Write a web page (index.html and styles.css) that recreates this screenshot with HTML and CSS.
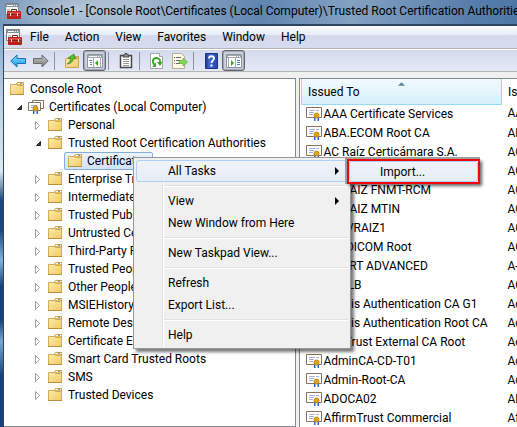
FILE: index.html
```
<!DOCTYPE html>
<html lang="en">
<head>
<meta charset="utf-8">
<title>Console1</title>
<link rel="stylesheet" href="styles.css">
</head>
<body>
<svg class="defs" aria-hidden="true">
  <defs>
    <linearGradient id="gold" x2="1" y2="1"><stop stop-color="#ffebad"/><stop offset="1" stop-color="#efca66"/></linearGradient>
    <linearGradient id="red" x2="0" y2="1"><stop stop-color="#e2554c"/><stop offset="1" stop-color="#b5130f"/></linearGradient>
    <linearGradient id="blue" x2="0" y2="1"><stop stop-color="#8bdcff"/><stop offset="1" stop-color="#0c9be8"/></linearGradient>
    <linearGradient id="gray" x2="0" y2="1"><stop stop-color="#c8c8c8"/><stop offset="1" stop-color="#7c7c7c"/></linearGradient>
    <linearGradient id="navy" x2="1" y2="0"><stop stop-color="#182f8c"/><stop offset=".3" stop-color="#3f68cf"/><stop offset="1" stop-color="#2448ac"/></linearGradient>
    <symbol id="folder" viewBox="0 0 16 16">
      <path d="M7.500 4V2.500l1-1h6V4z" fill="#f5d98c" stroke="#c9a050"/>
      <path d="M9 2h5v1H9z" fill="#fff"/><path d="M11 2h2v1h-2z" fill="#5a9bd8"/>
      <path d="M1.500 3.500h6l1 1h6v9h-13z" fill="url(#gold)" stroke="#d2ab56"/>
      <path d="M1 13.500h14" stroke="#b98f3b"/>
    </symbol>
    <symbol id="cert" viewBox="0 0 16 16">
      <path d="M.5 1.500h15v10H.5z" fill="#fff" stroke="#8a715d"/>
      <path d="M3 4.500h6M10 4.500h3M3 6.500h5M3 8.500h4" stroke="#a9b2de"/>
      <path d="M8 11h1.500v4H8zM11.500 11H13v4h-1.500z" fill="#2863d8"/>
      <circle cx="10.500" cy="9.500" r="2.500" fill="#e0a413" stroke="#c18a10"/>
    </symbol>
    <symbol id="certs" viewBox="0 0 16 16">
      <path d="M4.500 1.500h11v8h-11z" fill="#fff" stroke="#8a715d"/>
      <path d="M.5 3.500h12v8H.5z" fill="#fff" stroke="#8a715d"/>
      <path d="M3 6.500h6M3 8.500h3" stroke="#9aa5d8"/>
      <path d="M5 11h1.500v4H5zM8.500 11H10v4H8.500z" fill="#2863d8"/>
      <circle cx="7.500" cy="9.500" r="2.500" fill="#e0a413" stroke="#c18a10"/>
    </symbol>
    <symbol id="console" viewBox="0 0 16 16">
      <path d="M.5.5h13v11H.5z" fill="#f4f5f6" stroke="#7d858c"/>
      <path d="M1 1h12v3H1z" fill="#87919a"/><path d="M2 2.500h6M9 2.500h1M11 2.500h1" stroke="#fff"/>
      <path d="M2 6h3v5H2z" fill="#c9ced3"/>
      <path d="M6.500 8.500v-2h5v2" fill="none" stroke="#77201c"/>
      <path d="M2.500 8.500h13v7h-13z" fill="url(#red)" stroke="#b5231f"/>
      <path d="M3 11.500h12" stroke="#9c1814"/><path d="M5 10h1v3H5zM12 10h1v3h-1z" fill="#f3dada"/>
    </symbol>
    <symbol id="back" viewBox="0 0 16 16"><path d="M.8 8 7 2v3.500h8.500v5H7V14z" fill="url(#blue)" stroke="#1d70b0"/></symbol>
    <symbol id="forward" viewBox="0 0 16 16"><path d="M15.200 8 9 2v3.500H.5v5H9V14z" fill="url(#gray)" stroke="#6c6c6c"/></symbol>
    <symbol id="up" viewBox="0 0 16 16">
      <path d="M8.500 5V3.500h6V5z" fill="#f5d98c" stroke="#c9a050"/>
      <path d="M1.500 5.500h13v9h-13z" fill="url(#gold)" stroke="#cda44c"/>
      <path d="M3 11c2.500-1 3.500-3 3.500-5.500L4 5l6-4 1.500 5-2-.5C9 8.500 6.500 11 3 11z" fill="#58bd2c" stroke="#2d8619" stroke-width=".7"/>
    </symbol>
    <symbol id="tree" viewBox="0 0 16 16">
      <path d="M.5 1.500h15v13H.5z" fill="#fff" stroke="#8d949c"/><path d="M1 2h14v3H1z" fill="#a0a7af"/>
      <path d="M2 3.500h8M11 3.500h1M13 3.500h1" stroke="#fff"/><path d="M6.500 5v9" stroke="#a5abb2"/>
      <path d="M2 7.500h3M3 9.500h2M3 11.500h2" stroke="#4a86cc"/><path d="M11 7v6L8 10z" fill="#38a51f"/><path d="M13.500 5v9" stroke="#a5abb2"/>
    </symbol>
    <symbol id="action" viewBox="0 0 16 16">
      <path d="M.5 1.500h15v13H.5z" fill="#fff" stroke="#8d949c"/><path d="M1 2h14v3H1z" fill="#a0a7af"/>
      <path d="M2 3.500h8M11 3.500h1M13 3.500h1" stroke="#fff"/><path d="M9.500 5v9M2.500 5v9" stroke="#a5abb2"/>
      <path d="M11 7.500h3M11 9.500h3M11 11.500h3" stroke="#4a86cc"/><path d="M5 7v6l3-3z" fill="#38a51f"/>
    </symbol>
    <symbol id="clipboard" viewBox="0 0 16 16">
      <path d="M2.500 2.500h11v12h-11z" fill="#fff" stroke="#484848" stroke-width="1.500"/>
      <path d="M5 4V2h2V.5h2V2h2v2z" fill="#999" stroke="#444"/>
      <path d="M5 6.500h6M5 8.500h6M5 10.500h6M5 12.500h6" stroke="#999"/>
    </symbol>
    <symbol id="refresh" viewBox="0 0 16 16">
      <path d="M1.500.5h9l3 3v12h-12z" fill="#fff" stroke="#a6a6a6"/><path d="M10.500.5v3h3" fill="#eee" stroke="#a6a6a6"/>
      <path d="M6 12C2.500 9.500 3.500 5 7.500 5c2.500 0 4 2 3.500 4.500" fill="none" stroke="#38a528" stroke-width="1.800"/>
      <path d="M8 9h5.500L11 13zM7 9.500V14H3.500z" fill="#38a528"/>
    </symbol>
    <symbol id="export" viewBox="0 0 16 16">
      <path d="M.5.5h9l3 3v12H.5z" fill="#fffbe8" stroke="#b7ad8c"/>
      <path d="M2 4.500h1M2 7.500h1M2 10.500h1M4 4.500h5M4 7.500h4M4 10.500h4" stroke="#666"/>
      <path d="M7 7.500h4V5l4.500 4-4.500 4v-2.500H7z" fill="#83d858" stroke="#4ba32b" stroke-width=".6"/>
    </symbol>
    <symbol id="help" viewBox="0 0 16 16">
      <path d="M2.500.5h12v15h-12z" fill="url(#navy)" stroke="#1c3584"/>
      <path d="M6 5.500c0-3 5-3 5 0 0 2-2.500 2-2.500 4.500" fill="none" stroke="#fff" stroke-width="1.800"/><path d="M7.500 11.500h2v2h-2z" fill="#fff"/>
    </symbol>
    <symbol id="closed" viewBox="0 0 8 10"><path d="M1.500 1.500 5.500 5.500 1.500 9.500z" fill="#fff" stroke="#a0a0a0"/></symbol>
    <symbol id="open" viewBox="0 0 8 10"><path d="M6.500 3.500v4h-4z" fill="#404040" stroke="#222"/></symbol>
  </defs>
</svg>
<div class="window">
  <header class="titlebar"><svg class="icon"><use href="#console"/></svg><h1>Console1 - [Console Root\Certificates (Local Computer)\Trusted Root Certification Authorities\Certificates]</h1></header>
  <div class="frame">
    <nav class="menubar" aria-label="Main menu">
      <svg class="icon"><use href="#console"/></svg>
      <button>File</button><button>Action</button><button>View</button><button>Favorites</button><button>Window</button><button>Help</button>
    </nav>
    <div class="toolbar" role="toolbar" aria-label="Tools">
      <button aria-label="Back"><svg class="icon"><use href="#back"/></svg></button>
      <button aria-label="Forward"><svg class="icon"><use href="#forward"/></svg></button>
      <span class="rule"></span>
      <button aria-label="Up one level"><svg class="icon"><use href="#up"/></svg></button>
      <button class="pressed" aria-label="Show console tree"><svg class="icon"><use href="#tree"/></svg></button>
      <span class="rule"></span>
      <button aria-label="Paste"><svg class="icon"><use href="#clipboard"/></svg></button>
      <span class="rule"></span>
      <button aria-label="Refresh"><svg class="icon"><use href="#refresh"/></svg></button>
      <button aria-label="Export list"><svg class="icon"><use href="#export"/></svg></button>
      <span class="rule"></span>
      <button aria-label="Help"><svg class="icon"><use href="#help"/></svg></button>
      <button class="pressed" aria-label="Show action pane"><svg class="icon"><use href="#action"/></svg></button>
    </div>
    <main class="panes">
      <ul class="tree">
        <li class="root"><svg class="icon"><use href="#folder"/></svg>Console Root</li>
        <li class="l1"><svg class="twist"><use href="#open"/></svg><svg class="icon"><use href="#certs"/></svg>Certificates (Local Computer)</li>
        <li><svg class="twist"><use href="#closed"/></svg><svg class="icon"><use href="#folder"/></svg>Personal</li>
        <li><svg class="twist"><use href="#open"/></svg><svg class="icon"><use href="#folder"/></svg>Trusted Root Certification Authorities</li>
        <li class="l3"><span class="selected"><svg class="icon"><use href="#folder"/></svg>Certificates</span></li>
        <li><svg class="twist"><use href="#closed"/></svg><svg class="icon"><use href="#folder"/></svg>Enterprise Trust</li>
        <li><svg class="twist"><use href="#closed"/></svg><svg class="icon"><use href="#folder"/></svg>Intermediate</li>
        <li><svg class="twist"><use href="#closed"/></svg><svg class="icon"><use href="#folder"/></svg>Trusted Publishers</li>
        <li><svg class="twist"><use href="#closed"/></svg><svg class="icon"><use href="#folder"/></svg>Untrusted Certs</li>
        <li><svg class="twist"><use href="#closed"/></svg><svg class="icon"><use href="#folder"/></svg>Third-Party Root</li>
        <li><svg class="twist"><use href="#closed"/></svg><svg class="icon"><use href="#folder"/></svg>Trusted People</li>
        <li><svg class="twist"><use href="#closed"/></svg><svg class="icon"><use href="#folder"/></svg>Other People</li>
        <li><svg class="twist"><use href="#closed"/></svg><svg class="icon"><use href="#folder"/></svg>MSIEHistory...</li>
        <li><svg class="twist"><use href="#closed"/></svg><svg class="icon"><use href="#folder"/></svg>Remote Desktop</li>
        <li><svg class="twist"><use href="#closed"/></svg><svg class="icon"><use href="#folder"/></svg>Certificate Enroll</li>
        <li><svg class="twist"><use href="#closed"/></svg><svg class="icon"><use href="#folder"/></svg>Smart Card Trusted Roots</li>
        <li><svg class="twist"><use href="#closed"/></svg><svg class="icon"><use href="#folder"/></svg>SMS</li>
        <li><svg class="twist"><use href="#closed"/></svg><svg class="icon"><use href="#folder"/></svg>Trusted Devices</li>
      </ul>
      <div class="list">
        <table>
          <thead><tr><th class="sorted">Issued To<svg class="sort" viewBox="0 0 8 4"><path d="M0 4 4 0l4 4z" fill="#5c8196"/></svg></th><th>Issued By</th></tr></thead>
          <tbody>
            <tr><td><svg class="icon"><use href="#cert"/></svg>AAA Certificate Services</td><td>AAA</td></tr>
            <tr><td><svg class="icon"><use href="#cert"/></svg>ABA.ECOM Root CA</td><td>ABA</td></tr>
            <tr><td><svg class="icon"><use href="#cert"/></svg>AC Raíz Certicámara S.A.</td><td>AC</td></tr>
            <tr><td><svg class="icon"><use href="#cert"/></svg>AC</td><td>AC</td></tr>
            <tr><td><svg class="icon"><use href="#cert"/></svg>AC RAIZ FNMT-RCM</td><td>AC</td></tr>
            <tr><td><svg class="icon"><use href="#cert"/></svg>AC RAIZ MTIN</td><td>AC</td></tr>
            <tr><td><svg class="icon"><use href="#cert"/></svg>ACEVRAIZ1</td><td>AC</td></tr>
            <tr><td><svg class="icon"><use href="#cert"/></svg>ACEDICOM Root</td><td>AC</td></tr>
            <tr><td><svg class="icon"><use href="#cert"/></svg>A-CERT ADVANCED</td><td>A-</td></tr>
            <tr><td><svg class="icon"><use href="#cert"/></svg>ACNLB</td><td>AC</td></tr>
            <tr><td><svg class="icon"><use href="#cert"/></svg>Actalis Authentication CA G1</td><td>Ac</td></tr>
            <tr><td><svg class="icon"><use href="#cert"/></svg>Actalis Authentication Root CA</td><td>Ac</td></tr>
            <tr><td><svg class="icon"><use href="#cert"/></svg>AddTrust External CA Root</td><td>Ad</td></tr>
            <tr><td><svg class="icon"><use href="#cert"/></svg>AdminCA-CD-T01</td><td>Ad</td></tr>
            <tr><td><svg class="icon"><use href="#cert"/></svg>Admin-Root-CA</td><td>Ad</td></tr>
            <tr><td><svg class="icon"><use href="#cert"/></svg>ADOCA02</td><td>AD</td></tr>
            <tr><td><svg class="icon"><use href="#cert"/></svg>AffirmTrust Commercial</td><td>Af</td></tr>
          </tbody>
        </table>
      </div>
    </main>
  </div>
</div>
<div class="context" role="menu">
  <button role="menuitem" class="active">All Tasks<svg class="arrow" viewBox="0 0 4 8"><path d="M0 0v8l4-4z"/></svg></button>
  <hr>
  <button role="menuitem">View<svg class="arrow" viewBox="0 0 4 8"><path d="M0 0v8l4-4z"/></svg></button>
  <button role="menuitem">New Window from Here</button>
  <hr>
  <button role="menuitem">New Taskpad View...</button>
  <hr>
  <button role="menuitem">Refresh</button>
  <button role="menuitem">Export List...</button>
  <hr>
  <button role="menuitem">Help</button>
</div>
<div class="submenu" role="menu"><button role="menuitem">Import...</button></div>
</body>
</html>
```
FILE: styles.css
```
* { box-sizing: border-box; }
body { margin: 0; height: 100vh; overflow: hidden; position: relative; color: #000; font: 12px/18px Roboto, "Open Sans", sans-serif; }
button { font: inherit; color: inherit; border: 0; background: none; padding: 0; margin: 0; text-align: left; white-space: nowrap; }
.defs { position: absolute; width: 0; height: 0; }
.icon { width: 16px; height: 16px; flex: none; }
.window { display: flex; flex-direction: column; height: 100%; padding-left: 3px; background: linear-gradient(#4c78aa, #8aaed2 9%, #b9cde0 22%, #dce8f2 40%, #1d4680 47%, #1d4680 54%, #84b2dc 61%, #16417c 67%, #16417c 75%, #7ba9d5 80%, #16417c 88%); }
.titlebar { display: flex; align-items: center; gap: 5px; height: 24px; flex: none; margin-left: -3px; padding: 0 0 2px 5px; overflow: hidden; background: radial-gradient(ellipse 70px 20px at 75px 10px, #bfcbd8cc, transparent), linear-gradient(90deg, #7a9bbd, #a8bdd3 25%, #7f9cbe 40%, #5f84ae 50%, #84a2c2 68%, #587fab 90%, #4e77a6); }
.titlebar h1 { flex: 1; min-width: 0; overflow: hidden; margin: 0; font: inherit; white-space: nowrap; }
.frame { display: flex; flex-direction: column; flex: 1; min-height: 0; border: solid #2d4460; border-width: 2px 0 0 1px; background: #f0f0f0; }
.menubar { display: flex; align-items: center; height: 23px; flex: none; padding-left: 2px; border-bottom: 1px solid #b5b5b5; background: linear-gradient(#fdfdff, #e7ebf6 42%, #d4daec 43%, #d6dcee); }
.menubar button { padding: 0 8px; }
.toolbar { display: flex; align-items: center; height: 23px; flex: none; padding-left: 2px; border-top: 1px solid #fff; border-bottom: 1px solid #b5b5b5; background: linear-gradient(#d4daed, #e4e9f7); }
.toolbar button { display: flex; align-items: center; justify-content: center; width: 23px; height: 21px; }
.toolbar .pressed { border: 1px solid #5f6573; border-radius: 3px; background: #cfd3dc; box-shadow: inset 0 0 1px 1px #a0a6b4; }
.rule { width: 1px; height: 18px; margin: 0 5px 0 2px; background: #8d929c; }
.panes { display: flex; flex: 1; min-height: 0; gap: 3px; padding-top: 6px; }
.tree { width: 292px; flex: none; margin: 0; padding: 1px 0 0 5px; border: 1px solid #828790; border-left: 0; list-style: none; background: #fff; overflow: hidden; white-space: nowrap; }
.tree li { display: flex; align-items: center; gap: 5px; height: 18px; padding-left: 25px; }
.tree .root { padding-left: 0; }
.tree .l1 { padding-left: 6px; }
.tree .l3 { padding-left: 55px; }
.twist { width: 8px; height: 10px; flex: none; }
.selected { display: flex; align-items: center; gap: 4px; height: 18px; padding: 0 4px 0 2px; border: 1px solid #84acdd; border-radius: 2px; background: linear-gradient(#ecf4fd, #cfe3fc); }
.list { flex: 1; min-width: 0; padding: 0 0 0 1px; border: solid #828790; border-width: 1px 0 0 1px; background: #fff; overflow: hidden; }
table { width: 100%; border-collapse: collapse; table-layout: fixed; white-space: nowrap; }
th { height: 25px; padding: 1px 0 0 6px; font-weight: 400; text-align: left; overflow: hidden; }
th.sorted { position: relative; width: 200px; border: solid #96d9f9; border-width: 0 1px 1px; background: linear-gradient(#f2fbfe, #d7f0fb); }
.sort { position: absolute; top: 3px; left: 96px; width: 7px; height: 4px; }
td { height: 19px; padding: 0 0 0 4px; line-height: 19px; overflow: hidden; }
td + td { padding-left: 6px; }
td .icon { margin-right: 2px; vertical-align: middle; }
.context { position: absolute; left: 133px; top: 157px; width: 218px; padding: 2px; border: 1px solid #979797; background: linear-gradient(90deg, transparent 28px, #e2e3e3 28px, #e2e3e3 29px, #fff 29px, #fff 30px, transparent 30px), #f0f0f0; box-shadow: 3px 3px 3px #0008; }
.context button { display: flex; align-items: center; justify-content: space-between; width: 100%; height: 22px; padding: 0 9px 0 32px; }
.context hr { height: 2px; margin: 3px 0 3px 28px; border: 0; border-top: 1px solid #e0e0e0; background: #fff; }
.context .active, .submenu button { border: 1px solid #aecff7; border-radius: 3px; background: linear-gradient(#f0f3f9cc, #e4ecf6cc); }
.context .active { padding: 0 8px 0 31px; }
.arrow { width: 4px; height: 8px; }
.submenu { position: absolute; left: 347px; top: 159px; width: 133px; border: 2px solid #f00808; background: #f0f0f0; box-shadow: -1px -1px 0 1px #a0a0a0, 2px 2px 3px #0009; }
.submenu button { display: block; width: 100%; height: 21px; padding-left: 30px; }
```
